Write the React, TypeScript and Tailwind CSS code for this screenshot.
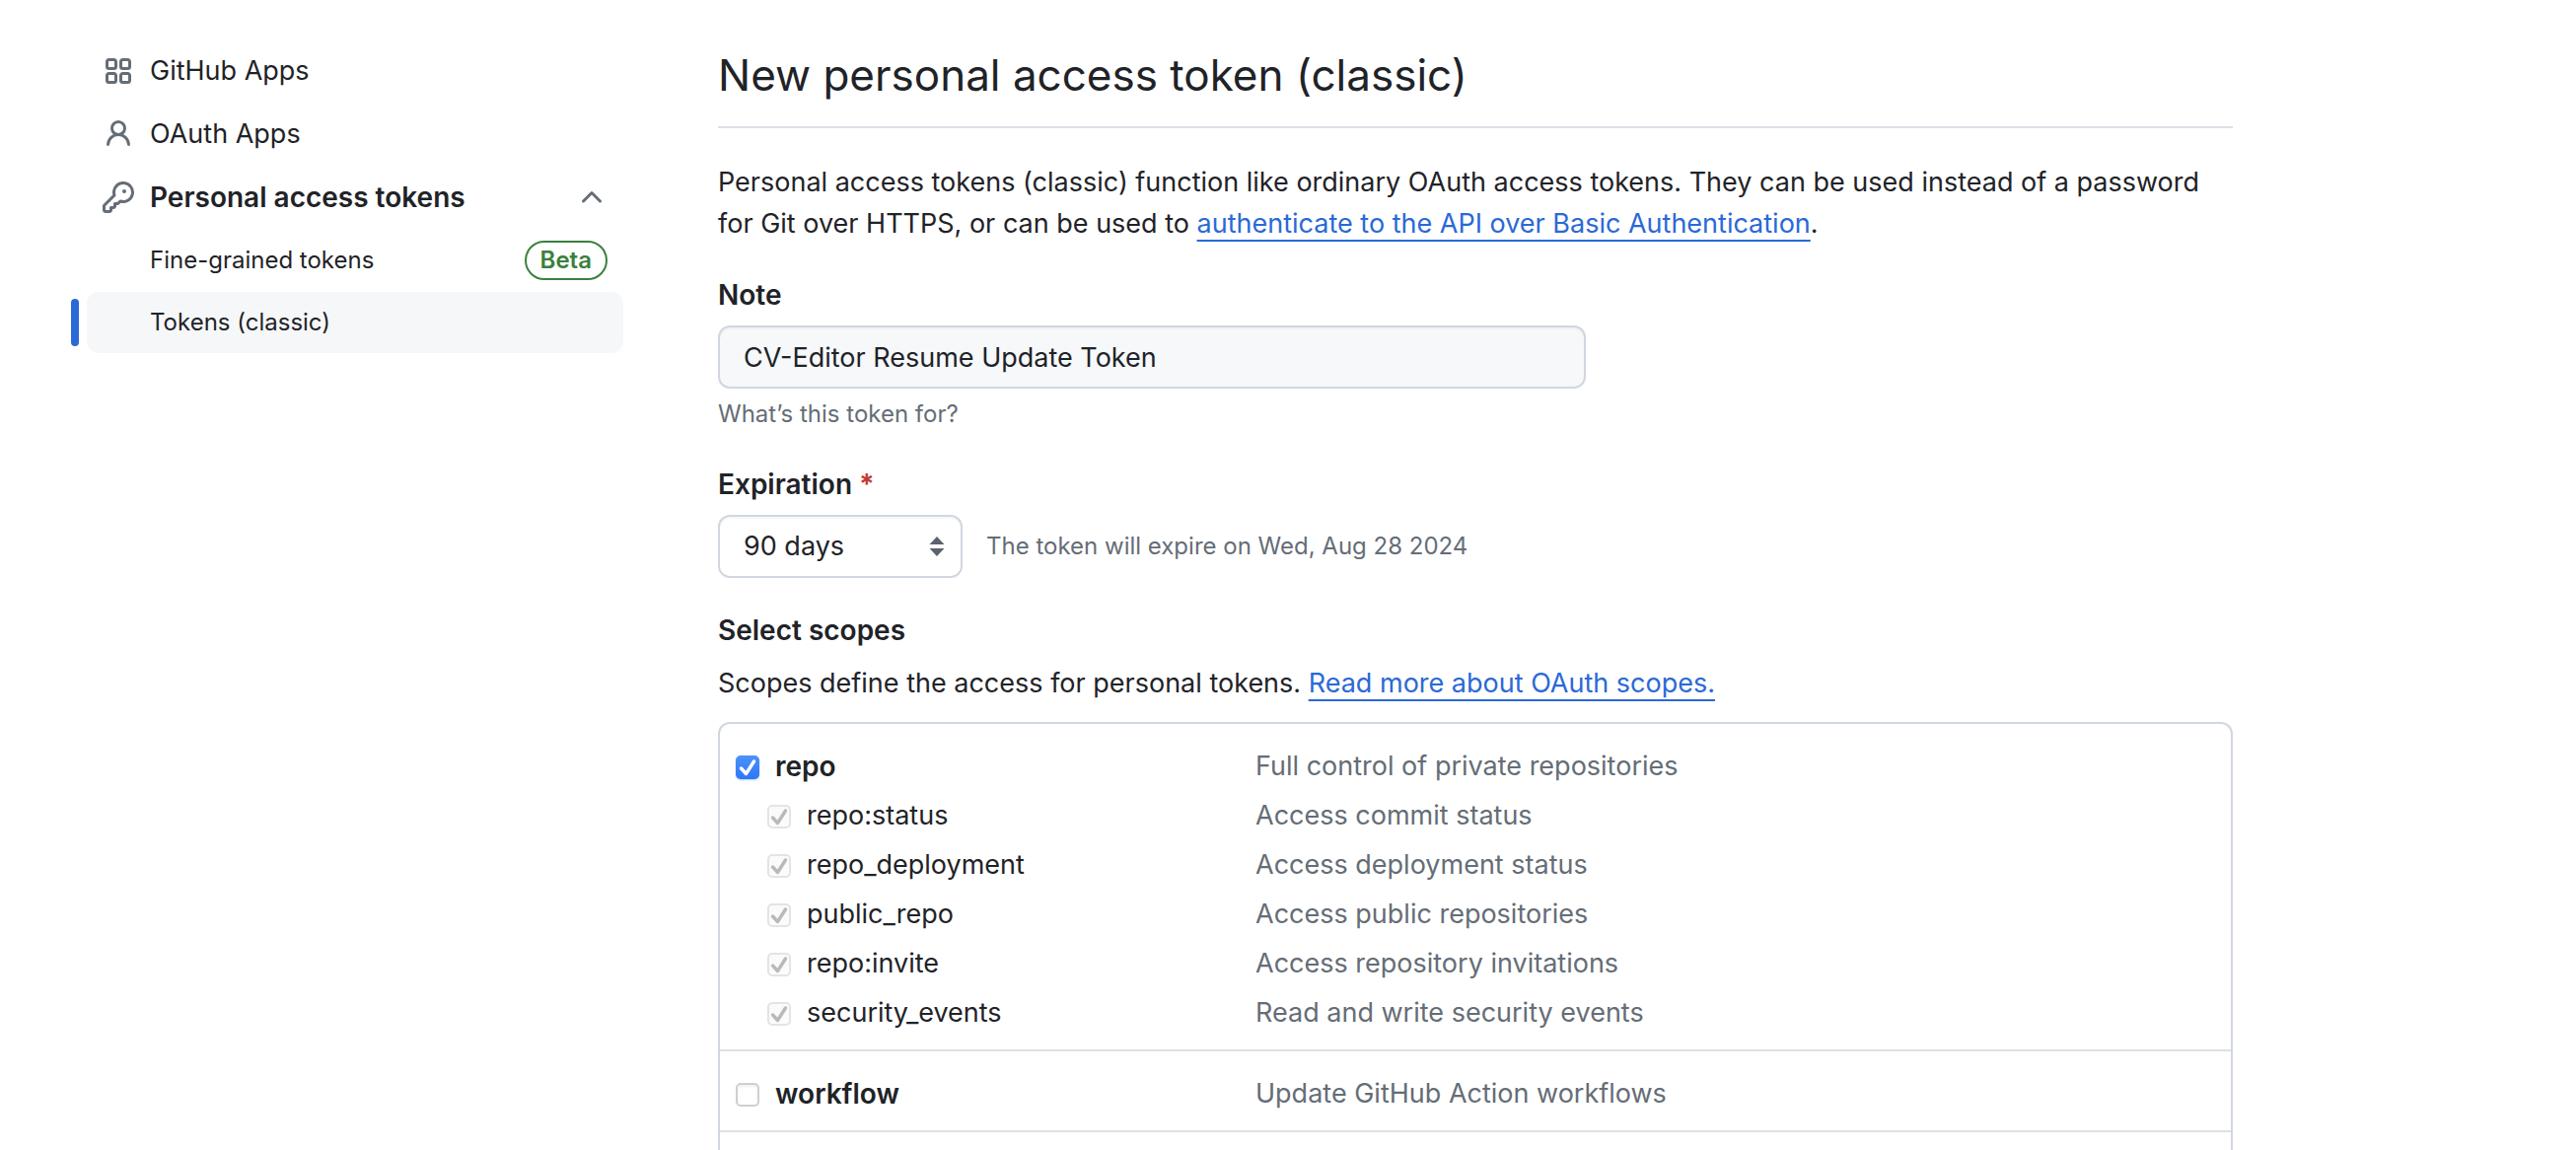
import React, { useState } from "react";

type Scope = { id: string; description: string; children?: Scope[] };

const scopes: Scope[] = [
  {
    id: "repo",
    description: "Full control of private repositories",
    children: [
      { id: "repo:status", description: "Access commit status" },
      { id: "repo_deployment", description: "Access deployment status" },
      { id: "public_repo", description: "Access public repositories" },
      { id: "repo:invite", description: "Access repository invitations" },
      { id: "security_events", description: "Read and write security events" },
    ],
  },
  { id: "workflow", description: "Update GitHub Action workflows" },
];

function Octicon({ d, className }: { d: string; className?: string }) {
  return (
    <svg viewBox="0 0 16 16" aria-hidden="true" className={className ?? "size-8 shrink-0 fill-[#656d76]"}>
      <path d={d} />
    </svg>
  );
}

const appsPath =
  "M1.5 3.25c0-.966.784-1.75 1.75-1.75h2.5c.966 0 1.75.784 1.75 1.75v2.5A1.75 1.75 0 0 1 5.75 7.5h-2.5A1.75 1.75 0 0 1 1.5 5.75Zm7 0c0-.966.784-1.75 1.75-1.75h2.5c.966 0 1.75.784 1.75 1.75v2.5a1.75 1.75 0 0 1-1.75 1.75h-2.5A1.75 1.75 0 0 1 8.5 5.75Zm-7 7c0-.966.784-1.75 1.75-1.75h2.5c.966 0 1.75.784 1.75 1.75v2.5a1.75 1.75 0 0 1-1.75 1.75h-2.5a1.75 1.75 0 0 1-1.75-1.75Zm7 0c0-.966.784-1.75 1.75-1.75h2.5c.966 0 1.75.784 1.75 1.75v2.5a1.75 1.75 0 0 1-1.75 1.75h-2.5a1.75 1.75 0 0 1-1.75-1.75ZM3.25 3a.25.25 0 0 0-.25.25v2.5c0 .138.112.25.25.25h2.5A.25.25 0 0 0 6 5.75v-2.5A.25.25 0 0 0 5.75 3Zm7 0a.25.25 0 0 0-.25.25v2.5c0 .138.112.25.25.25h2.5a.25.25 0 0 0 .25-.25v-2.5a.25.25 0 0 0-.25-.25Zm-7 7a.25.25 0 0 0-.25.25v2.5c0 .138.112.25.25.25h2.5a.25.25 0 0 0 .25-.25v-2.5a.25.25 0 0 0-.25-.25Zm7 0a.25.25 0 0 0-.25.25v2.5c0 .138.112.25.25.25h2.5a.25.25 0 0 0 .25-.25v-2.5a.25.25 0 0 0-.25-.25Z";
const personPath =
  "M10.561 8.073a6.005 6.005 0 0 1 3.432 5.142.75.75 0 1 1-1.498.07 4.5 4.5 0 0 0-8.99 0 .75.75 0 0 1-1.498-.07 6.004 6.004 0 0 1 3.431-5.142 3.999 3.999 0 1 1 5.123 0ZM10.5 5a2.5 2.5 0 1 0-5 0 2.5 2.5 0 0 0 5 0Z";
const keyPath =
  "M10.5 0a5.499 5.499 0 1 1-1.288 10.848l-.932.932a.749.749 0 0 1-.53.22H7v.75a.749.749 0 0 1-.22.53l-.5.5a.749.749 0 0 1-.53.22H5v.75a.749.749 0 0 1-.22.53l-.5.5a.749.749 0 0 1-.53.22h-2A1.75 1.75 0 0 1 0 14.25v-2c0-.199.079-.389.22-.53l4.932-4.932A5.5 5.5 0 0 1 10.5 0Zm-4 5.5c-.001.431.069.86.205 1.269a.75.75 0 0 1-.181.768L1.5 12.56v1.69c0 .138.112.25.25.25h1.69l.06-.06v-1.19a.75.75 0 0 1 .75-.75h1.19l.06-.06v-1.19a.75.75 0 0 1 .75-.75h1.19l1.023-1.025a.75.75 0 0 1 .768-.18A4 4 0 1 0 6.5 5.5ZM11 6a1 1 0 1 1 0-2 1 1 0 0 1 0 2Z";
const chevronPath =
  "M3.22 10.53a.749.749 0 0 1 0-1.06l4.25-4.25a.749.749 0 0 1 1.06 0l4.25 4.25a.749.749 0 1 1-1.06 1.06L8 6.811 4.28 10.53a.749.749 0 0 1-1.06 0Z";

function Sidebar() {
  return (
    <nav aria-label="Developer settings" className="w-[560px] shrink-0 pt-10">
      <ul>
        <li>
          <a href="#github-apps" className="ml-4 flex h-16 items-center gap-4 px-4">
            <Octicon d={appsPath} />
            GitHub Apps
          </a>
        </li>
        <li>
          <a href="#oauth-apps" className="ml-4 flex h-16 items-center gap-4 px-4">
            <Octicon d={personPath} />
            OAuth Apps
          </a>
        </li>
        <li>
          <button
            type="button"
            aria-expanded="true"
            className="ml-4 flex h-16 w-[544px] items-center gap-4 px-4 text-left text-[28px] font-semibold"
          >
            <Octicon d={keyPath} />
            <span className="grow">Personal access tokens</span>
            <Octicon d={chevronPath} />
          </button>
          <ul className="text-[24px]">
            <li>
              <a href="#fine-grained" className="ml-4 flex h-16 items-center justify-between pr-4 pl-16">
                Fine-grained tokens
                <span className="flex h-10 items-center rounded-full border-2 border-[#3a803d] px-3.5 font-semibold text-[#3a803d]">
                  Beta
                </span>
              </a>
            </li>
            <li className="flex items-center gap-2">
              <span className="h-12 w-2 rounded-full bg-[#2b6ad6]" />
              <a
                href="#classic"
                aria-current="page"
                className="flex h-[62px] grow items-center rounded-xl bg-[#f6f7f9] pl-16"
              >
                Tokens (classic)
              </a>
            </li>
          </ul>
        </li>
      </ul>
    </nav>
  );
}

function Checkbox({
  id,
  checked,
  disabled,
  onChange,
}: {
  id: string;
  checked: boolean;
  disabled?: boolean;
  onChange?: () => void;
}) {
  return (
    <span className="mt-0.5 grid size-6 shrink-0">
      <input
        id={id}
        type="checkbox"
        checked={checked}
        disabled={disabled}
        onChange={onChange ?? (() => {})}
        className="col-start-1 row-start-1 size-6 appearance-none rounded-[5px] border-2 border-[#cfcfd1] bg-white shadow-[inset_0_2px_3px_rgba(0,0,0,0.06)] checked:border-0 checked:bg-linear-to-b checked:from-[#4a93fa] checked:to-[#2e77f6] checked:shadow-[0_1px_2px_rgba(46,119,246,0.35)] disabled:border-2 disabled:border-[#e4e4e4] disabled:from-[#fafafa] disabled:to-[#fcfcfc] disabled:shadow-none"
      />
      {checked && (
        <svg
          viewBox="0 0 24 24"
          aria-hidden="true"
          className={
            disabled
              ? "pointer-events-none col-start-1 row-start-1 size-6 fill-none stroke-[#b9b9b9]"
              : "pointer-events-none col-start-1 row-start-1 size-6 fill-none stroke-white"
          }
        >
          <path d="M5.5 13 L10.5 18.5 L18.5 6" strokeWidth="3.4" strokeLinecap="round" strokeLinejoin="round" />
        </svg>
      )}
    </span>
  );
}

export default function App() {
  const [checked, setChecked] = useState<Record<string, boolean>>({ repo: true });
  const toggle = (id: string) => setChecked((c) => ({ ...c, [id]: !c[id] }));

  return (
    <div className="flex gap-24 bg-white pl-[72px] font-['Inter',sans-serif] text-[27px] leading-[42px] text-[#1f2328]">
      <Sidebar />
      <main className="max-w-[1536px] grow pt-11">
        <h1 className="border-b-2 border-[#dce1e6] pb-5 text-[44px] leading-16">New personal access token (classic)</h1>
        <p className="mt-[34px]">
          Personal access tokens (classic) function like ordinary OAuth access tokens. They can be used instead of a
          password for Git over HTTPS, or can be used to{" "}
          <a
            href="#basic-auth"
            className="text-[#2a69d7] underline decoration-2 underline-offset-[7px] [text-decoration-skip-ink:none]"
          >
            authenticate to the API over Basic Authentication
          </a>
          .
        </p>

        <form onSubmit={(e) => e.preventDefault()}>
          <label htmlFor="note" className="mt-[30px] block text-[28px] font-semibold">
            Note
          </label>
          <input
            id="note"
            type="text"
            defaultValue="CV-Editor Resume Update Token"
            className="mt-2.5 block h-16 w-[880px] rounded-xl border-2 border-[#d1d7df] bg-[#f6f8fa] px-6 shadow-[inset_0_2px_0_rgba(208,215,222,0.2)]"
          />
          <p className="mt-2 text-[24px] leading-9 text-[#656d76]">What’s this token for?</p>

          <label htmlFor="expiration" className="mt-8 block text-[28px] font-semibold">
            Expiration <span className="font-bold text-[#c23a38]">*</span>
          </label>
          <div className="mt-2.5 flex items-center gap-6">
            <div className="grid w-[248px] items-center">
              <select
                id="expiration"
                defaultValue="90"
                className="col-start-1 row-start-1 h-16 appearance-none rounded-xl border-2 border-[#d1d7df] bg-white pr-12 pl-6 shadow-[inset_0_2px_0_rgba(208,215,222,0.2)]"
              >
                <option value="30">30 days</option>
                <option value="60">60 days</option>
                <option value="90">90 days</option>
              </select>
              <svg
                viewBox="0 0 16 20"
                aria-hidden="true"
                className="pointer-events-none col-start-1 row-start-1 mr-[18px] h-5 w-4 justify-self-end fill-[#5c636d]"
              >
                <path d="M8 0 L15.5 8 H.5Z M8 20 L15.5 12 H.5Z" />
              </svg>
            </div>
            <span className="text-[24px] text-[#656d76]">The token will expire on Wed, Aug 28 2024</span>
          </div>

          <h2 className="mt-8 text-[28px] font-semibold">Select scopes</h2>
          <p className="mt-3">
            Scopes define the access for personal tokens.{" "}
            <a
              href="#scopes"
              className="text-[#2a69d7] underline decoration-2 underline-offset-[7px] [text-decoration-skip-ink:none]"
            >
              Read more about OAuth scopes.
            </a>
          </p>

          <ul className="mt-[18px] rounded-t-xl border-2 border-b-0 border-[#d1d7df]">
            {scopes.map((scope) => (
              <li key={scope.id} className="border-b-2 border-[#dce1e6] px-4 pt-[18px] pb-3">
                <div className="flex h-[50px] items-center">
                  <label htmlFor={scope.id} className="flex w-[527px] items-center gap-4 text-[28px] font-semibold">
                    <Checkbox id={scope.id} checked={!!checked[scope.id]} onChange={() => toggle(scope.id)} />
                    {scope.id}
                  </label>
                  <span className="text-[#656d76]">{scope.description}</span>
                </div>
                {scope.children && (
                  <ul>
                    {scope.children.map((child) => (
                      <li key={child.id} className="flex h-[50px] items-center pl-8">
                        <label htmlFor={child.id} className="flex w-[495px] items-center gap-4">
                          <Checkbox id={child.id} checked={!!checked[scope.id]} disabled={!!checked[scope.id]} />
                          {child.id}
                        </label>
                        <span className="text-[#656d76]">{child.description}</span>
                      </li>
                    ))}
                  </ul>
                )}
              </li>
            ))}
            <li className="h-[18px]" />
          </ul>
        </form>
      </main>
    </div>
  );
}
